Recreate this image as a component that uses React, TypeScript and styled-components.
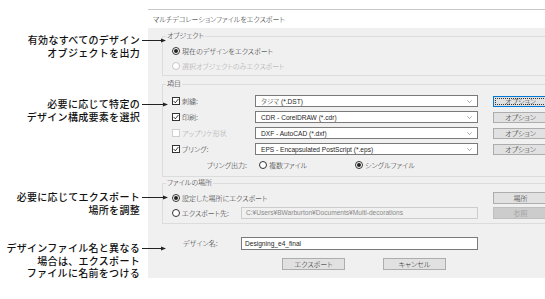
import styled, { createGlobalStyle } from "styled-components";

const GlobalStyle = createGlobalStyle`
  html, body {
    margin: 0;
    padding: 0;
    background: #fff;
  }
  body {
    width: 545px;
    height: 299px;
    overflow: hidden;
  }
`;

const Page = styled.div`
  display: flex;
  align-items: flex-start;
  width: 545px;
  height: 299px;
  overflow: hidden;
`;

const Notes = styled.div`
  width: 148px;
  flex-shrink: 0;
  display: flex;
  flex-direction: column;
  position: relative;
  z-index: 2;
`;

const Callout = styled.div<{ $gap: number }>`
  position: relative;
  width: 140px;
  margin-top: ${(p) => p.$gap}px;
  text-align: right;
  font-family: "Noto Sans CJK JP", sans-serif;
  font-size: 10px;
  font-weight: 500;
  line-height: 12.5px;
  letter-spacing: 0.3px;
  color: #111;
  white-space: nowrap;
`;

const ArrowSvg = styled.svg`
  position: absolute;
  left: 142px;
  top: 3px;
`;

function Arrow({ len }: { len: number }) {
  return (
    <ArrowSvg width={len} height={7} viewBox={`0 0 ${len} 7`}>
      <line x1="0" y1="3.5" x2={len - 4} y2="3.5" stroke="#222" strokeWidth="1" />
      <polygon points={`${len - 5},1.5 ${len},3.5 ${len - 5},5.5`} fill="#222" />
    </ArrowSvg>
  );
}

const Dialog = styled.div`
  width: 410px;
  flex-shrink: 0;
  margin-top: 9px;
  border-top: 1px solid #c9c9c9;
  font-family: "Liberation Sans", "Noto Sans CJK JP", sans-serif;
  font-feature-settings: "palt";
  font-size: 7px;
  font-weight: 300;
  color: #262626;
`;

const TitleBar = styled.div`
  height: 18px;
  display: flex;
  align-items: center;
  padding-left: 5px;
  background: #fff;
`;

const Body = styled.div`
  background: #f0f0f0;
  padding: 4px 0 8px 14px;
`;

const Group = styled.fieldset<{ $gap?: number }>`
  margin: ${(p) => p.$gap ?? 0}px 0 0 0;
  padding: 0;
  width: 394px;
  border: 1px solid #dcdcdc;
  min-inline-size: 0;
`;

const Legend = styled.legend`
  margin-left: 3px;
  padding: 0 1px;
  font-size: 7px;
  line-height: 8px;
`;

const GroupInner = styled.div<{ $top: number; $bottom: number }>`
  padding: ${(p) => p.$top}px 0 ${(p) => p.$bottom}px 9px;
`;

const RadioRow = styled.div`
  height: 15px;
  display: flex;
  align-items: center;
`;

const Choice = styled.span<{ $disabled?: boolean; $width?: number }>`
  display: inline-flex;
  align-items: center;
  gap: 2px;
  color: ${(p) => (p.$disabled ? "#a6a6a6" : "inherit")};
  width: ${(p) => (p.$width ? `${p.$width}px` : "auto")};
  white-space: nowrap;
`;

const Radio = styled.span<{ $checked?: boolean; $disabled?: boolean }>`
  display: inline-flex;
  align-items: center;
  justify-content: center;
  box-sizing: border-box;
  width: 8px;
  height: 8px;
  border-radius: 50%;
  border: 1px solid ${(p) => (p.$disabled ? "#c8c8c8" : "#333")};
  background: #fff;
  flex-shrink: 0;
  &::after {
    content: "";
    display: ${(p) => (p.$checked ? "block" : "none")};
    width: 4px;
    height: 4px;
    border-radius: 50%;
    background: #222;
  }
`;

const Box = styled.span<{ $disabled?: boolean }>`
  display: inline-flex;
  align-items: center;
  justify-content: center;
  box-sizing: border-box;
  width: 8px;
  height: 8px;
  border: 1px solid ${(p) => (p.$disabled ? "#cfcfcf" : "#333")};
  background: #fff;
  flex-shrink: 0;
`;

function Check({ on, disabled }: { on?: boolean; disabled?: boolean }) {
  return (
    <Box $disabled={disabled}>
      {on && (
        <svg width="6" height="6" viewBox="0 0 6 6">
          <polyline points="0.6,3 2.3,4.8 5.4,1" fill="none" stroke="#222" strokeWidth="0.9" />
        </svg>
      )}
    </Box>
  );
}

const ItemRow = styled.div`
  height: 16px;
  display: grid;
  grid-template-columns: 83px 223px 55px;
  align-items: center;
  & > :nth-child(3) {
    margin-left: 15px;
  }
`;

const OutLabel = styled.span`
  text-align: right;
  padding-right: 8px;
`;

const OutChoices = styled.div`
  display: flex;
  align-items: center;
  padding-left: 4px;
`;

const Select = styled.div`
  box-sizing: border-box;
  height: 12px;
  display: flex;
  align-items: center;
  justify-content: space-between;
  padding: 0 5px;
  background: #fff;
  border: 1px solid #7a7a7a;
  font-size: 6.6px;
  white-space: nowrap;
  overflow: hidden;
`;

const Chevron = () => (
  <svg width="5" height="3" viewBox="0 0 5 3">
    <polyline points="0.3,0.3 2.5,2.6 4.7,0.3" fill="none" stroke="#8a8a8a" strokeWidth="0.7" />
  </svg>
);

const Btn = styled.div<{ $focus?: boolean; $disabled?: boolean; $w?: number; $h?: number }>`
  box-sizing: border-box;
  width: ${(p) => p.$w ?? 55}px;
  height: ${(p) => p.$h ?? 11}px;
  display: flex;
  align-items: center;
  justify-content: center;
  background: ${(p) => (p.$disabled ? "#cccccc" : "#e1e1e1")};
  border: 1px solid ${(p) => (p.$focus ? "#0078d7" : p.$disabled ? "#bfbfbf" : "#adadad")};
  outline: ${(p) => (p.$focus ? "1px dotted #333" : "none")};
  outline-offset: -3px;
  color: ${(p) => (p.$disabled ? "#8d8d8d" : "inherit")};
  white-space: nowrap;
`;

const FileRow = styled.div`
  height: 15px;
  display: grid;
  grid-template-columns: 69px 237px 55px;
  align-items: center;
  & > :nth-child(3) {
    margin-left: 15px;
  }
`;

const PathField = styled.div`
  box-sizing: border-box;
  height: 12px;
  display: flex;
  align-items: center;
  padding-left: 4px;
  background: #f0f0f0;
  border: 1px solid #cccccc;
  color: #8a8a8a;
  font-size: 6.6px;
  white-space: nowrap;
  overflow: hidden;
`;

const NameRow = styled.div`
  margin-top: 12px;
  height: 14px;
  display: grid;
  grid-template-columns: 79px 237px;
  align-items: center;
`;

const NameLabel = styled.span`
  padding-left: 21px;
`;

const TextInput = styled.div`
  box-sizing: border-box;
  height: 13px;
  display: flex;
  align-items: center;
  padding-left: 3px;
  background: #fff;
  border: 1px solid #7a7a7a;
  font-size: 6.6px;
  white-space: nowrap;
`;

const Actions = styled.div`
  margin-top: 8px;
  display: flex;
  gap: 38px;
  padding-left: 120px;
`;

const items = [
  { label: "刺繍:", value: "タジマ (*.DST)", on: true, focus: true },
  { label: "印刷:", value: "CDR - CorelDRAW (*.cdr)", on: true },
  { label: "アップリケ形状", value: "DXF - AutoCAD (*.dxf)", disabled: true },
  { label: "ブリング:", value: "EPS - Encapsulated PostScript (*.eps)", on: true },
];

export default function App() {
  return (
    <>
      <GlobalStyle />
      <Page>
        <Notes>
          <Callout $gap={34}>
            有効なすべてのデザイン
            <br />
            オブジェクトを出力
            <Arrow len={24} />
          </Callout>
          <Callout $gap={39}>
            必要に応じて特定の
            <br />
            デザイン構成要素を選択
            <Arrow len={26} />
          </Callout>
          <Callout $gap={68}>
            必要に応じてエクスポート
            <br />
            場所を調整
            <Arrow len={26} />
          </Callout>
          <Callout $gap={26}>
            デザインファイル名と異なる
            <br />
            場合は、エクスポート
            <br />
            ファイルに名前をつける
            <Arrow len={24} />
          </Callout>
        </Notes>

        <Dialog>
          <TitleBar>マルチデコレーションファイルをエクスポート</TitleBar>
          <Body>
            <Group>
              <Legend>オブジェクト</Legend>
              <GroupInner $top={3} $bottom={2}>
                <RadioRow>
                  <Choice>
                    <Radio $checked />
                    現在のデザインをエクスポート
                  </Choice>
                </RadioRow>
                <RadioRow>
                  <Choice $disabled>
                    <Radio $disabled />
                    選択オブジェクトのみエクスポート
                  </Choice>
                </RadioRow>
              </GroupInner>
            </Group>

            <Group $gap={4}>
              <Legend>項目</Legend>
              <GroupInner $top={5} $bottom={3}>
                {items.map((it) => (
                  <ItemRow key={it.label}>
                    <Choice $disabled={it.disabled}>
                      <Check on={it.on} disabled={it.disabled} />
                      {it.label}
                    </Choice>
                    <Select>
                      <span>{it.value}</span>
                      <Chevron />
                    </Select>
                    <Btn $focus={it.focus}>オプション</Btn>
                  </ItemRow>
                ))}
                <ItemRow>
                  <OutLabel>ブリング出力:</OutLabel>
                  <OutChoices>
                    <Choice $width={96}>
                      <Radio />
                      複数ファイル
                    </Choice>
                    <Choice>
                      <Radio $checked />
                      シングルファイル
                    </Choice>
                  </OutChoices>
                </ItemRow>
              </GroupInner>
            </Group>

            <Group $gap={2}>
              <Legend>ファイルの場所</Legend>
              <GroupInner $top={3} $bottom={3}>
                <FileRow>
                  <Choice>
                    <Radio $checked />
                    設定した場所にエクスポート
                  </Choice>
                  <span />
                  <Btn $h={12}>場所</Btn>
                </FileRow>
                <FileRow>
                  <Choice>
                    <Radio />
                    エクスポート先:
                  </Choice>
                  <PathField>C:¥Users¥BWarburton¥Documents¥Multi-decorations</PathField>
                  <Btn $h={12} $disabled>
                    参照
                  </Btn>
                </FileRow>
              </GroupInner>
            </Group>

            <NameRow>
              <NameLabel>デザイン名:</NameLabel>
              <TextInput>Designing_e4_final</TextInput>
            </NameRow>

            <Actions>
              <Btn $w={63} $h={12}>
                エクスポート
              </Btn>
              <Btn $w={63} $h={12}>
                キャンセル
              </Btn>
            </Actions>
          </Body>
        </Dialog>
      </Page>
    </>
  );
}
